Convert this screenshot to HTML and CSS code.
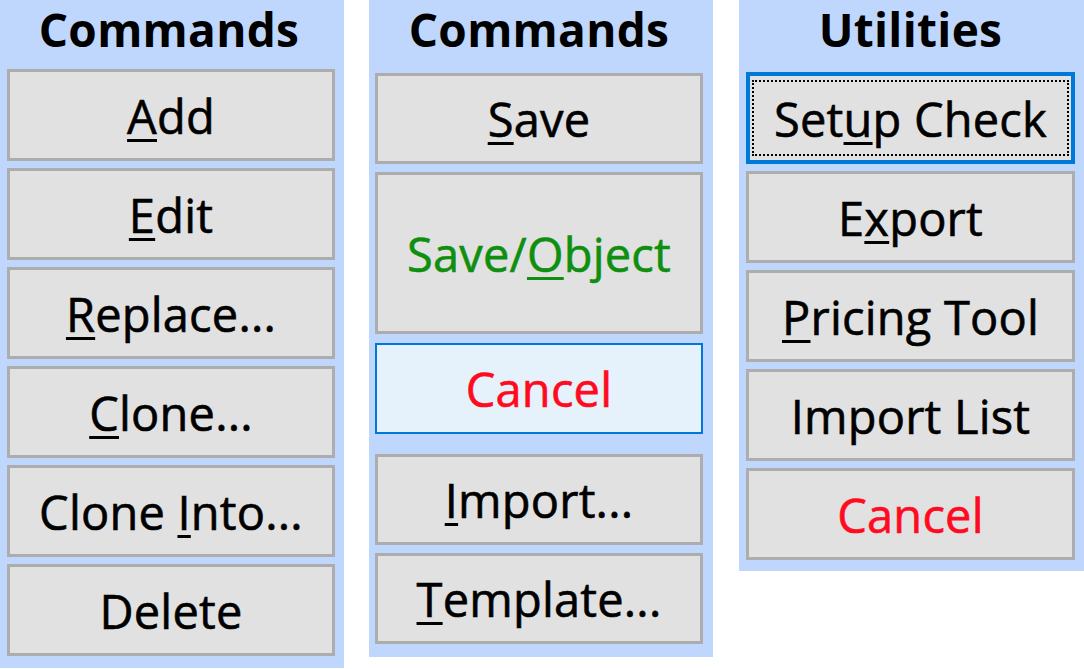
FILE: index.html
```html
<!DOCTYPE html>
<html>
<head>
<meta charset="utf-8">
<link rel="stylesheet" href="styles.css">
</head>
<body>
<div class="row">
  <section class="panel p1">
    <h2 class="title">Commands</h2>
    <div class="btns">
      <div class="btn"><span><u>A</u>dd</span></div>
      <div class="btn"><span><u>E</u>dit</span></div>
      <div class="btn"><span><u>R</u>eplace...</span></div>
      <div class="btn"><span><u>C</u>lone...</span></div>
      <div class="btn"><span>Clone <u>I</u>nto...</span></div>
      <div class="btn"><span>Delete</span></div>
    </div>
  </section>
  <section class="panel p2">
    <h2 class="title">Commands</h2>
    <div class="btns">
      <div class="btn"><span><u>S</u>ave</span></div>
      <div class="btn tall green"><span>Save/<u>O</u>bject</span></div>
      <div class="btn hover red"><span>Cancel</span></div>
      <div class="btn after-gap"><span><u>I</u>mport...</span></div>
      <div class="btn"><span><u>T</u>emplate...</span></div>
    </div>
  </section>
  <section class="panel p3">
    <h2 class="title">Utilities</h2>
    <div class="btns">
      <div class="btn focus"><span class="focusrect">Set<u>u</u>p Check</span></div>
      <div class="btn"><span>E<u>x</u>port</span></div>
      <div class="btn"><span><u>P</u>ricing Tool</span></div>
      <div class="btn"><span>Import List</span></div>
      <div class="btn red"><span>Cancel</span></div>
    </div>
  </section>
</div>
</body>
</html>
```
FILE: styles.css
```css
html, body {
  margin: 0;
  padding: 0;
  background: #ffffff;
  font-family: "Open Sans", "Noto Sans", "DejaVu Sans", sans-serif;
}
.row {
  display: flex;
  align-items: flex-start;
  gap: 25px;
  width: 1084px;
}
.panel {
  background: #bfd7fc;
  box-sizing: border-box;
  width: 344px;
}
.p1 { padding: 0 9px 12px 7px; }
.p2 { padding: 0 10px 13px 6px; }
.p3 { padding: 0 9px 11px 7px; width: 345px; margin-left: 1px; }
.title {
  margin: 0;
  font-size: 46px;
  font-weight: 700;
  text-align: center;
  line-height: 58px;
  height: 69px;
  color: #000;
  letter-spacing: 0.3px;
}
.p1 .title { padding-right: 4px; }
.p2 .title { height: 73px; }
.p3 .title { height: 72px; }
.btns {
  display: flex;
  flex-direction: column;
  gap: 7px;
}
.p2 .btns { gap: 8px; }
.btn {
  box-sizing: border-box;
  height: 92px;
  background: #e1e1e1;
  border: 3px solid #adadad;
  display: flex;
  align-items: center;
  justify-content: center;
  font-size: 47px;
  color: #000;
  line-height: 1;
  -webkit-text-stroke: 0.6px currentColor;
  letter-spacing: 0.2px;
}
.btn span { padding-top: 2px; }
.btn u {
  text-decoration-thickness: 3px;
  text-underline-offset: 5px;
}
.p2 .btn { height: 91px; }
.p2 .btn.tall { height: 162px; }
.p2 .btn.hover { margin-top: 1px; }
.p2 .btn.after-gap { margin-top: 12px; }
.green { color: #0f8f0f; }
.red { color: #ff0a1e; }
.hover {
  background: #e5f1fb;
  border: 2px solid #0078d7;
}
.focus {
  border: 4px solid #0078d7;
  padding: 4px 2px;
  align-items: stretch;
}
.focusrect {
  flex: 1;
  border: 2px dotted #000;
  display: flex;
  align-items: center;
  justify-content: center;
}
```
